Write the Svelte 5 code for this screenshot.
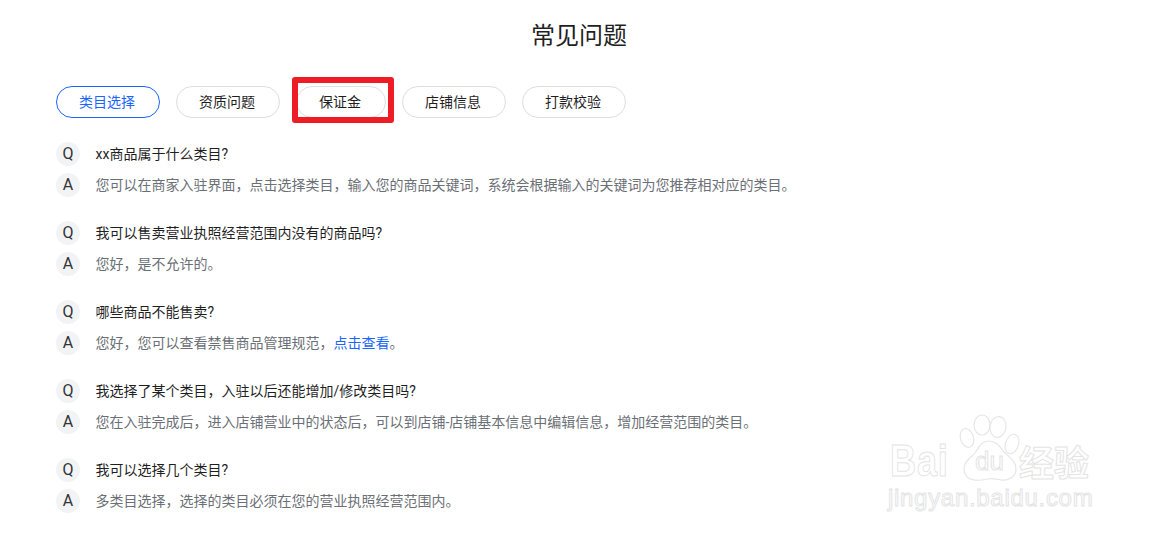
<script>
	const tabs = ['类目选择', '资质问题', '保证金', '店铺信息', '打款校验'];
	const faqs = [
		{ q: 'xx商品属于什么类目?', a: '您可以在商家入驻界面，点击选择类目，输入您的商品关键词，系统会根据输入的关键词为您推荐相对应的类目。' },
		{ q: '我可以售卖营业执照经营范围内没有的商品吗?', a: '您好，是不允许的。' },
		{ q: '哪些商品不能售卖?', a: '您好，您可以查看禁售商品管理规范，', link: '点击查看', end: '。' },
		{ q: '我选择了某个类目，入驻以后还能增加/修改类目吗?', a: '您在入驻完成后，进入店铺营业中的状态后，可以到店铺-店铺基本信息中编辑信息，增加经营范围的类目。' },
		{ q: '我可以选择几个类目?', a: '多类目选择，选择的类目必须在您的营业执照经营范围内。' }
	];
</script>

<div class="page">
	<h1 class="title">常见问题</h1>
	<div class="tabs">
		{#each tabs as tab, i}
			<button class="tab" class:active={i === 0}>{tab}</button>
		{/each}
	</div>
	<div class="faq">
		{#each faqs as item}
			<div class="item">
				<div class="row question">
					<span class="badge">Q</span>
					<span class="text">{item.q}</span>
				</div>
				<div class="row answer">
					<span class="badge">A</span>
					<span class="text">{item.a}{#if item.link}<a href="#top" class="link">{item.link}</a>{item.end}{/if}</span>
				</div>
			</div>
		{/each}
	</div>

	<!-- red annotation box drawn over the screenshot -->
	<div class="highlight"></div>

	<!-- baidu jingyan watermark -->
	<div class="watermark" aria-hidden="true">
		<svg class="paw" width="64" height="72" viewBox="0 0 64 72" fill="#fff" stroke="#e6e6e6" stroke-width="1.2">
			<ellipse cx="24" cy="11" rx="8" ry="10" />
			<ellipse cx="40" cy="13" rx="8" ry="10.5" transform="rotate(8 40 13)" />
			<ellipse cx="9" cy="24" rx="6.5" ry="9.5" transform="rotate(-18 9 24)" />
			<ellipse cx="54" cy="30" rx="6.5" ry="10" transform="rotate(18 54 30)" />
			<path d="M31 27c8 0 11 6 15 11 5 5 12 9 12 17 0 8-8 12-15 11-6-1-9-2-14-1-8 2-23 3-23-10 0-8 7-11 11-16 4-6 6-12 14-12z" />
		</svg>
		<span class="wm-bai">Bai</span>
		<span class="wm-du">du</span>
		<span class="wm-cn">经验</span>
		<span class="wm-url">jingyan.baidu.com</span>
	</div>
</div>

<style>
	:global(body) {
		margin: 0;
		background: #fff;
	}

	.page {
		position: relative;
		width: 1156px;
		height: 538px;
		overflow: hidden;
		box-sizing: border-box;
		padding: 0 56px;
		font-family: Roboto, "Noto Sans CJK SC", sans-serif;
		color: #111;
	}

	.title {
		margin: 0;
		padding: 18px 0 0 2px;
		height: 86px;
		box-sizing: border-box;
		font-size: 24px;
		line-height: 36px;
		font-weight: 400;
		text-align: center;
		color: #1f1f1f;
	}

	.tabs {
		display: flex;
		gap: 16px;
	}

	.tab {
		height: 32px;
		padding: 0 24px 2px 22px;
		border: 1px solid #dcdee0;
		border-radius: 16px;
		background: #fff;
		font: inherit;
		font-size: 14px;
		color: #1f1f1f;
	}

	.tab.active {
		border-color: #1966ff;
		color: #1966ff;
	}

	.faq {
		display: flex;
		flex-direction: column;
		gap: 24px;
		margin-top: 24px;
	}

	.item {
		display: flex;
		flex-direction: column;
		gap: 7px;
	}

	.row {
		display: flex;
		align-items: center;
		gap: 15.5px;
		height: 24px;
		font-size: 14px;
	}

	.text {
		padding-bottom: 2px;
	}

	.question {
		color: #1f1f1f;
	}

	.answer {
		color: #6b6f76;
	}

	.badge {
		flex: none;
		width: 24px;
		height: 24px;
		border-radius: 50%;
		background: #f2f3f5;
		color: #333;
		font-size: 16px;
		line-height: 24px;
		text-align: center;
	}

	.link {
		color: #1966ff;
		text-decoration: none;
	}

	.highlight {
		position: absolute;
		left: 292px;
		top: 77px;
		width: 102px;
		height: 46px;
		box-sizing: border-box;
		border: 6px solid #ee1c25;
		border-radius: 3px;
	}

	.watermark {
		position: absolute;
		left: 885px;
		top: 410px;
		width: 215px;
		height: 115px;
		color: #fff;
		-webkit-text-stroke: 1px #e4e4e4;
		font-family: "Liberation Sans", sans-serif;
		white-space: nowrap;
	}

	.watermark span {
		position: absolute;
		line-height: 1;
	}

	.paw {
		position: absolute;
		left: 73px;
		top: 4px;
	}

	.wm-bai {
		left: 5px;
		top: 29px;
		font-size: 44px;
		font-weight: 700;
		letter-spacing: 1px;
		transform: scaleX(0.82);
		transform-origin: left center;
	}

	.wm-du {
		left: 90px;
		top: 38px;
		font-size: 26px;
	}

	.wm-cn {
		left: 134px;
		top: 33px;
		font-size: 35px;
		font-weight: 700;
		font-family: "Noto Sans CJK SC", sans-serif;
	}

	.wm-url {
		left: 3px;
		top: 76px;
		font-size: 24px;
		letter-spacing: 0.7px;
	}
</style>
